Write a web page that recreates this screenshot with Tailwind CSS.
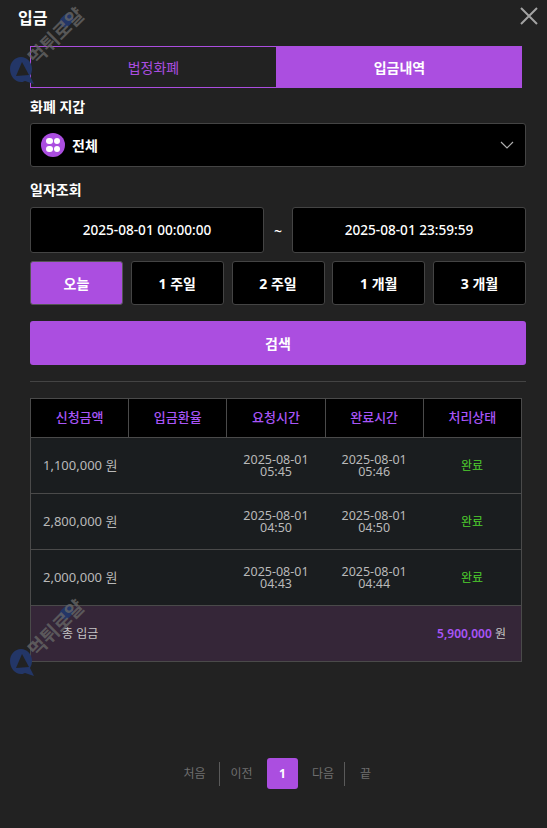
<!DOCTYPE html>
<html lang="ko">
<head>
<meta charset="utf-8">
<script src="https://cdn.jsdelivr.net/npm/@tailwindcss/browser@4"></script>
</head>
<body class="m-0 bg-[#222222]">
<div class="relative w-[547px] h-[828px] overflow-hidden bg-[#222222] text-white font-['Noto_Sans','Noto_Sans_CJK_KR',sans-serif]">
  <div class="h-[46px] pl-[18px] pt-[6px] flex justify-between items-start">
    <h1 class="text-[16px] leading-[24px] font-bold">입금</h1>
    <svg class="mr-[9px] mt-[1px]" width="18" height="18" viewBox="0 0 18 18" fill="none" stroke="#a3a3a3" stroke-width="2"><path d="M1 1L17 17M17 1L1 17"/></svg>
  </div>
  <div class="pl-[30px] w-[526px]">
    <div class="flex w-[492px] h-[42px] text-[14px]">
      <div class="flex-1 flex items-center justify-center border border-[#ab4ee0] text-[#ab4ee0]">법정화폐</div>
      <div class="flex-1 flex items-center justify-center bg-[#ab4ee0] font-semibold">입금내역</div>
    </div>
    <div class="mt-[9px] h-[20px] leading-[20px] text-[14px] font-bold">화폐 지갑</div>
    <div class="mt-[6px] h-[44px] bg-black border border-[#444] rounded-[3px] flex items-center pl-[10px] pr-[11px]">
      <span class="w-[24px] h-[24px] rounded-full bg-[#ab4ee0] grid grid-cols-2 content-center justify-center gap-[1.5px] px-[5px]">
        <i class="block w-[6.5px] h-[6.5px] rounded-full bg-white"></i><i class="block w-[6.5px] h-[6.5px] rounded-full bg-white"></i><i class="block w-[6.5px] h-[6.5px] rounded-full bg-white"></i><i class="block w-[6.5px] h-[6.5px] rounded-full bg-white"></i>
      </span>
      <span class="ml-[7px] text-[14px] font-bold">전체</span>
      <svg class="ml-auto" width="14" height="8" viewBox="0 0 14 8" fill="none" stroke="#b0b0b0" stroke-width="1.2"><path d="M1 1L7 7L13 1"/></svg>
    </div>
    <div class="mt-[13px] h-[20px] leading-[20px] text-[14px] font-bold">일자조회</div>
    <div class="mt-[7px] flex items-center h-[46px]">
      <div class="w-[234px] h-full bg-black border border-[#444] rounded-[3px] flex items-center justify-center text-[13.6px] font-medium">2025-08-01 00:00:00</div>
      <div class="flex-1 text-center text-[14px] font-medium">~</div>
      <div class="w-[234px] h-full bg-black border border-[#444] rounded-[3px] flex items-center justify-center text-[13.6px] font-medium">2025-08-01 23:59:59</div>
    </div>
    <div class="mt-[8px] h-[44px] flex justify-between text-[14px] font-bold">
      <div class="w-[93px] bg-[#ab4ee0] border border-[#555] rounded-[3px] flex items-center justify-center">오늘</div>
      <div class="w-[93px] bg-black border border-[#444] rounded-[3px] flex items-center justify-center">1 주일</div>
      <div class="w-[93px] bg-black border border-[#444] rounded-[3px] flex items-center justify-center">2 주일</div>
      <div class="w-[93px] bg-black border border-[#444] rounded-[3px] flex items-center justify-center">1 개월</div>
      <div class="w-[93px] bg-black border border-[#444] rounded-[3px] flex items-center justify-center">3 개월</div>
    </div>
    <div class="mt-[16px] h-[44px] bg-[#ab4ee0] rounded-[3px] flex items-center justify-center text-[14px] font-bold">검색</div>
    <div class="mt-[16px] h-px bg-[#444]"></div>
    <table class="mt-[16px] w-[492px] table-fixed border-collapse text-[12.5px]">
      <thead>
        <tr class="h-[39px] bg-black text-[#a855f7] text-[13px]">
          <th class="border border-[#4a4a4a] font-medium">신청금액</th>
          <th class="border border-[#4a4a4a] font-medium">입금환율</th>
          <th class="border border-[#4a4a4a] font-medium">요청시간</th>
          <th class="border border-[#4a4a4a] font-medium">완료시간</th>
          <th class="border border-[#4a4a4a] font-medium">처리상태</th>
        </tr>
      </thead>
      <tbody class="bg-[#1a1d1f] text-[#b9b9b9]">
        <tr class="h-[56px] border border-[#4a4a4a]">
          <td class="pl-[12px] text-[13px]">1,100,000 원</td><td></td>
          <td class="text-center leading-[12px]">2025-08-01<br>05:45</td>
          <td class="text-center leading-[12px]">2025-08-01<br>05:46</td>
          <td class="text-center text-[12px] text-[#4fd12e]">완료</td>
        </tr>
        <tr class="h-[56px] border border-[#4a4a4a]">
          <td class="pl-[12px] text-[13px]">2,800,000 원</td><td></td>
          <td class="text-center leading-[12px]">2025-08-01<br>04:50</td>
          <td class="text-center leading-[12px]">2025-08-01<br>04:50</td>
          <td class="text-center text-[12px] text-[#4fd12e]">완료</td>
        </tr>
        <tr class="h-[56px] border border-[#4a4a4a]">
          <td class="pl-[12px] text-[13px]">2,000,000 원</td><td></td>
          <td class="text-center leading-[12px]">2025-08-01<br>04:43</td>
          <td class="text-center leading-[12px]">2025-08-01<br>04:44</td>
          <td class="text-center text-[12px] text-[#4fd12e]">완료</td>
        </tr>
        <tr class="h-[56px] border border-[#4a4a4a] bg-[#352638] text-[#c4c4c4] text-[12px]">
          <td colspan="2" class="pl-[31px]">총 입금</td>
          <td colspan="3" class="pr-[15px] text-right"><span class="text-[#a855f7] font-semibold">5,900,000</span> 원</td>
        </tr>
      </tbody>
    </table>
  </div>
  <div class="mt-[96px] ml-[172px] flex items-center h-[31px] text-[12px] text-[#6f6f6f]">
    <span class="w-[48px] h-[24px] leading-[24px] text-center border-r border-[#5a5a5a] pr-[2px]">처음</span>
    <span class="w-[47px] text-center pr-[4px]">이전</span>
    <span class="w-[31px] h-[31px] bg-[#ab4ee0] rounded-[3px] text-white font-bold flex items-center justify-center">1</span>
    <span class="w-[47px] h-[24px] leading-[24px] text-center border-r border-[#5a5a5a] pl-[4px]">다음</span>
    <span class="w-[41px] text-center">끝</span>
  </div>
  <div class="absolute left-[6px] top-[8px] w-[92px] h-[92px] pointer-events-none">
    <svg class="absolute left-[3px] top-[47px]" width="26" height="32" viewBox="0 0 26 32"><path d="M12 2C18 2 23 7 23 14C23 17 22 19 21 21L25 29L16 26C14 27 13 27 12 27C6 27 1 21 1 14C1 7 6 2 12 2Z" fill="#233667"/><path d="M13 7L20 20L7 21Z" fill="#222222"/></svg>
    <div class="absolute left-[55px] top-[5px] w-[11px] h-[15px] rounded-full bg-[#233667] rotate-45"></div>
    <div class="absolute left-[8px] top-[17px] w-[84px] text-center -rotate-45 text-[19px] leading-[22px] font-bold text-[#666666]/80 whitespace-nowrap">먹튀로얄</div>
  </div>
  <div class="absolute left-[6px] top-[600px] w-[92px] h-[92px] pointer-events-none">
    <svg class="absolute left-[3px] top-[47px]" width="26" height="32" viewBox="0 0 26 32"><path d="M12 2C18 2 23 7 23 14C23 17 22 19 21 21L25 29L16 26C14 27 13 27 12 27C6 27 1 21 1 14C1 7 6 2 12 2Z" fill="#233667"/><path d="M13 7L20 20L7 21Z" fill="#222222"/></svg>
    <div class="absolute left-[55px] top-[5px] w-[11px] h-[15px] rounded-full bg-[#233667] rotate-45"></div>
    <div class="absolute left-[8px] top-[17px] w-[84px] text-center -rotate-45 text-[19px] leading-[22px] font-bold text-[#666666]/80 whitespace-nowrap">먹튀로얄</div>
  </div>
</div>
</body>
</html>
